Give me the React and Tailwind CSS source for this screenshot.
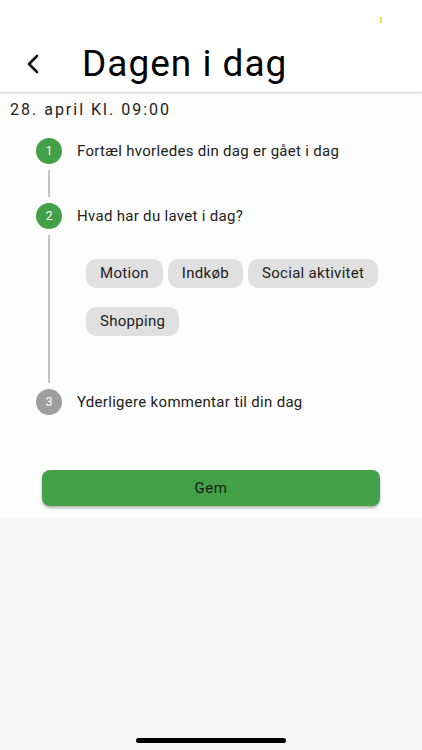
import React from "react";

const steps = [
  { n: 1, label: "Fortæl hvorledes din dag er gået i dag", active: true },
  { n: 2, label: "Hvad har du lavet i dag?", active: true },
  { n: 3, label: "Yderligere kommentar til din dag", active: false },
];

const chips = ["Motion", "Indkøb", "Social aktivitet", "Shopping"];

function StepHeader({ step }) {
  return (
    <div className="flex items-center h-[26px]">
      <div
        className={
          "w-[26px] h-[26px] rounded-full flex items-center justify-center text-white text-[12px] " +
          (step.active ? "bg-[#43a047]" : "bg-[#9e9e9e]")
        }
      >
        {step.n}
      </div>
      <span className="ml-[15px] text-[15px] tracking-[0.3px] text-[#212121]">{step.label}</span>
    </div>
  );
}

function Connector({ children, className }) {
  return (
    <div className={"flex " + className}>
      <div className="w-[26px] flex justify-center py-[6px]">
        <div className="w-[1.5px] bg-[#c4c4c4]" />
      </div>
      <div className="flex-1">{children}</div>
    </div>
  );
}

export default function App() {
  return (
    <div
      className="h-[750px] w-full flex flex-col bg-[#f7f7f7] overflow-hidden"
      style={{ fontFamily: "Roboto, 'Liberation Sans', sans-serif" }}
    >
      {/* header */}
      <div className="relative h-[92px] bg-white flex items-end pb-[6px] shadow-[0_1px_2px_rgba(0,0,0,0.2)] z-10">
        <span className="absolute left-[380px] top-[17px] w-[2px] h-[6px] bg-[#f7d84a]" />
        <button className="ml-[24px] mb-[12px] w-[18px] h-[20px] flex items-center justify-center">
          <svg width="14" height="20" viewBox="0 0 14 20" fill="none">
            <path d="M11 2 L3 10 L11 18" stroke="#111" strokeWidth="2.6" strokeLinecap="round" strokeLinejoin="round" />
          </svg>
        </button>
        <h1 className="ml-[40px] text-[37px] leading-[44px] tracking-[1px] text-black">Dagen i dag</h1>
      </div>

      {/* body */}
      <div className="bg-[#fdfdfd] pb-[12px]">
        <p className="pl-[10px] pt-[8px] text-[16px] leading-[20px] tracking-[2px] text-[#222]">
          28. april Kl. 09:00
        </p>

        <div className="pl-[36px] pt-[18px]">
          <StepHeader step={steps[0]} />
          <Connector className="h-[39px]" />
          <StepHeader step={steps[1]} />
          <Connector className="h-[160px]">
            <div className="pl-[24px] pt-[30px] flex flex-wrap gap-x-[5px] gap-y-[19px] pr-[20px]">
              {chips.map((c) => (
                <span
                  key={c}
                  className="h-[29px] px-[14px] rounded-[10px] bg-[#e0e0e0] text-[15px] tracking-[0.3px] text-[#222] flex items-center"
                >
                  {c}
                </span>
              ))}
            </div>
          </Connector>
          <StepHeader step={steps[2]} />
        </div>

        <div className="px-[42px] pt-[55px]">
          <button className="w-full h-[36px] rounded-[8px] bg-[#43a047] text-[15px] tracking-[0.5px] text-[#1b1b1b] shadow-[0_2px_3px_rgba(0,0,0,0.3)]">
            Gem
          </button>
        </div>
      </div>

      <div className="flex-1 flex items-end justify-center pb-[7px]">
        <div className="w-[150px] h-[5px] rounded-full bg-black" />
      </div>
    </div>
  );
}
